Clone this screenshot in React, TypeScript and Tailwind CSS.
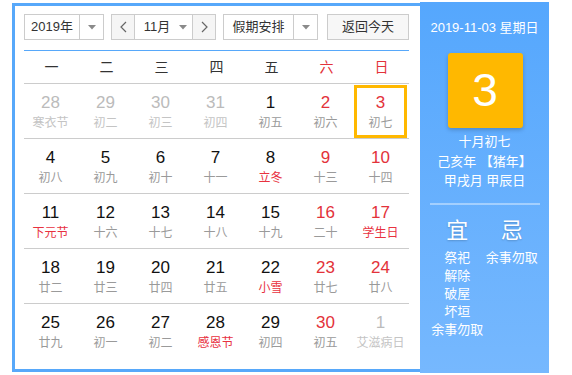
import React from "react";

type Day = {
  n: number;
  lunar: string;
  other?: boolean;
  fest?: boolean;
  selected?: boolean;
};

const weeks: Day[][] = [
  [
    { n: 28, lunar: "寒衣节", other: true },
    { n: 29, lunar: "初二", other: true },
    { n: 30, lunar: "初三", other: true },
    { n: 31, lunar: "初四", other: true },
    { n: 1, lunar: "初五" },
    { n: 2, lunar: "初六" },
    { n: 3, lunar: "初七", selected: true },
  ],
  [
    { n: 4, lunar: "初八" },
    { n: 5, lunar: "初九" },
    { n: 6, lunar: "初十" },
    { n: 7, lunar: "十一" },
    { n: 8, lunar: "立冬", fest: true },
    { n: 9, lunar: "十三" },
    { n: 10, lunar: "十四" },
  ],
  [
    { n: 11, lunar: "下元节", fest: true },
    { n: 12, lunar: "十六" },
    { n: 13, lunar: "十七" },
    { n: 14, lunar: "十八" },
    { n: 15, lunar: "十九" },
    { n: 16, lunar: "二十" },
    { n: 17, lunar: "学生日", fest: true },
  ],
  [
    { n: 18, lunar: "廿二" },
    { n: 19, lunar: "廿三" },
    { n: 20, lunar: "廿四" },
    { n: 21, lunar: "廿五" },
    { n: 22, lunar: "小雪", fest: true },
    { n: 23, lunar: "廿七" },
    { n: 24, lunar: "廿八" },
  ],
  [
    { n: 25, lunar: "廿九" },
    { n: 26, lunar: "初一" },
    { n: 27, lunar: "初二" },
    { n: 28, lunar: "感恩节", fest: true },
    { n: 29, lunar: "初四" },
    { n: 30, lunar: "初五" },
    { n: 1, lunar: "艾滋病日", other: true },
  ],
];

const weekdays = ["一", "二", "三", "四", "五", "六", "日"];

const Caret = () => (
  <svg width="8" height="5" viewBox="0 0 8 5">
    <path d="M0 0 L8 0 L4 4.5 Z" fill="#8a8a8a" />
  </svg>
);

const Chevron = ({ dir }: { dir: "left" | "right" }) => (
  <svg width="7" height="12" viewBox="0 0 7 12">
    <polyline
      points={dir === "left" ? "6,1 1,6 6,11" : "1,1 6,6 1,11"}
      fill="none"
      stroke="#666"
      strokeWidth="1.2"
    />
  </svg>
);

const DayCell = ({ day, col }: { day: Day; col: number }) => {
  const weekend = col >= 5;
  let numColor = "text-[#111]";
  if (day.other) numColor = "text-[#bbbbbb]";
  else if (weekend) numColor = "text-[#e3323a]";
  let lunarColor = "text-[#9a9a9a]";
  if (day.other) lunarColor = "text-[#c4c4c4]";
  else if (day.fest) lunarColor = "text-[#e8323f]";

  return (
    <div className="pt-[1px]">
      <div
        className={`flex h-[53px] w-[53px] flex-col items-center justify-center border-[3px] ${
          day.selected ? "border-[#ffb800]" : "border-transparent"
        }`}
      >
        <div className={`text-[17px] leading-[20px] ${numColor}`}>{day.n}</div>
        <div className={`mt-[2px] whitespace-nowrap text-[12px] leading-[16px] ${lunarColor}`}>
          {day.lunar}
        </div>
      </div>
    </div>
  );
};

export default function App() {
  return (
    <div
      className="h-[375px] w-[572px] bg-white"
      style={{ fontFamily: '"Liberation Sans", "Noto Sans CJK SC", sans-serif' }}
    >
      <div className="ml-[12px] flex pt-[2px]">
        {/* left calendar */}
        <div className="mt-[1px] h-[369px] w-[408px] border-y-[3px] border-l-[3px] border-[#57a8fa] pl-[9px] pr-[11px] pt-[8px]">
          {/* toolbar */}
          <div className="flex h-[26px] items-stretch text-[13px] text-[#333]">
            <div className="flex w-[80px] border border-[#cccccc] bg-white">
              <div className="flex w-[54px] items-center justify-center">2019年</div>
              <div className="flex flex-1 items-center justify-center border-l border-[#cccccc]">
                <Caret />
              </div>
            </div>

            <div className="ml-[7px] flex w-[105px] border border-[#cccccc]">
              <div className="flex w-[22px] items-center justify-center bg-[#f5f5f5]">
                <Chevron dir="left" />
              </div>
              <div className="flex w-[59px] items-center justify-center gap-[9px] border-x border-[#cccccc] bg-white pl-[4px]">
                <span>11月</span>
                <Caret />
              </div>
              <div className="flex flex-1 items-center justify-center bg-[#f5f5f5]">
                <Chevron dir="right" />
              </div>
            </div>

            <div className="ml-[7px] flex w-[95px] border border-[#cccccc] bg-white">
              <div className="flex w-[69px] items-center justify-center">假期安排</div>
              <div className="flex flex-1 items-center justify-center border-l border-[#cccccc]">
                <Caret />
              </div>
            </div>

            <div className="ml-[9px] flex w-[82px] items-center justify-center border border-[#cccccc] bg-[#f7f7f7]">
              返回今天
            </div>
          </div>

          <div className="mt-[10px] h-[1px] bg-[#57a8fa]" />

          {/* weekday header */}
          <div className="grid h-[33px] grid-cols-7 items-center border-b border-[#cccccc] text-[14px]">
            {weekdays.map((w, i) => (
              <div
                key={w}
                className={`text-center ${i >= 5 ? "text-[#e3323a]" : "text-[#333]"}`}
              >
                {w}
              </div>
            ))}
          </div>

          {/* weeks */}
          {weeks.map((week, wi) => (
            <div
              key={wi}
              className={`grid h-[55px] grid-cols-7 ${
                wi < weeks.length - 1 ? "border-b border-[#cccccc]" : ""
              }`}
            >
              {week.map((d, ci) => (
                <DayCell key={ci} day={d} col={ci} />
              ))}
            </div>
          ))}
        </div>

        {/* right panel */}
        <div className="flex h-[371px] w-[129px] flex-col items-center bg-gradient-to-b from-[#55a7fd] to-[#76b8fe] pt-[17px] text-white">
          <div className="text-[13px] leading-[18px]">2019-11-03 星期日</div>
          <div className="ml-[1px] mt-[16px] flex h-[75px] w-[75px] items-center justify-center rounded-[3px] bg-[#ffb800] text-[46px] shadow-[0_2px_4px_rgba(0,0,0,0.2)]">
            3
          </div>
          <div className="mt-[4px] text-center text-[13px] leading-[19.5px]">
            <div>十月初七</div>
            <div>己亥年 【猪年】</div>
            <div>甲戌月 甲辰日</div>
          </div>
          <div className="mt-[12px] h-[2px] w-[110px] bg-white/40" />
          <div className="mt-[13px] grid w-full grid-cols-2 px-[10px]">
            <div className="flex flex-col items-center">
              <div className="text-[22px] leading-[26px] [text-shadow:0_1px_2px_rgba(0,0,0,0.2)]">宜</div>
              <div className="mt-[5px] flex flex-col items-center whitespace-nowrap text-[13px] leading-[18px]">
                <div>祭祀</div>
                <div>解除</div>
                <div>破屋</div>
                <div>坏垣</div>
                <div>余事勿取</div>
              </div>
            </div>
            <div className="flex flex-col items-center">
              <div className="text-[22px] leading-[26px] [text-shadow:0_1px_2px_rgba(0,0,0,0.2)]">忌</div>
              <div className="mt-[5px] flex flex-col items-center whitespace-nowrap text-[13px] leading-[18px]">
                <div>余事勿取</div>
              </div>
            </div>
          </div>
        </div>
      </div>
    </div>
  );
}
